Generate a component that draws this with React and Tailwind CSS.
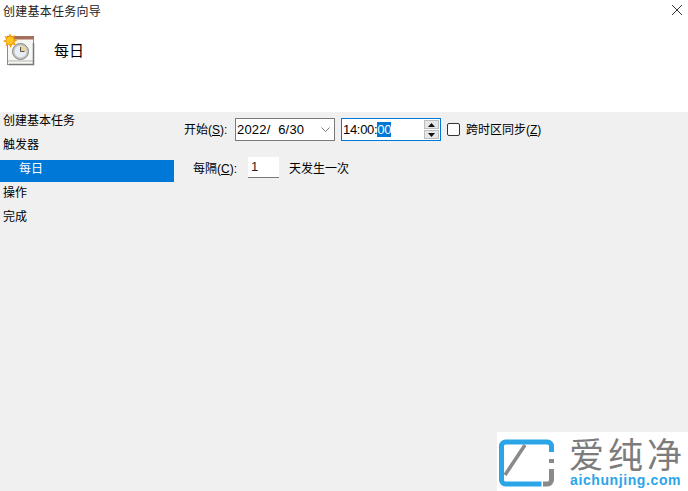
import React from 'react';

const cjk = "font-['Liberation_Sans','Noto_Sans_CJK_SC',sans-serif]";

const TaskIcon = () => (
    <svg width="34" height="34" viewBox="0 0 34 34" className="block">
        <g transform="translate(-3 -1)">
            <rect x="7.500" y="4.500" width="26" height="27" fill="#f6f6f2" stroke="#8c8c8c" />
            <rect x="7" y="3" width="27" height="3.500" fill="#a5705a" />
            <rect x="8" y="27" width="25" height="2" fill="#d4d4d4" />
            <path d="M9 31.500h24.500V10" fill="none" stroke="#777" strokeWidth="1.500" />
            <circle cx="20.500" cy="18.500" r="8" fill="#c4c4c4" stroke="#888" />
            <circle cx="20.500" cy="18.500" r="6" fill="#e8eef4" />
            <path d="M20.500 12.500a6 6 0 0 1 6 6h-6z" fill="#ecd49a" />
            <path d="M20.500 14v4.500h4" fill="none" stroke="#555" strokeWidth="1" />
            <path d="M10 0l1.500 3.700 3.600-1.700-1.200 3.800 3.800 1.200-3.400 1.900 1.700 3.500-3.900-1-1.300 3.600-1.900-3.400-3.500 1.700 1-3.800-3.800-1.400 3.500-1.700-1.700-3.500 3.800 1z" fill="#f59f0a" />
            <circle cx="10" cy="7.500" r="3.500" fill="#ffc820" />
        </g>
    </svg>
);

const Logo = () => (
    <div className="absolute right-0 bottom-0 w-[191px] h-[59px] bg-white flex pl-[2px] pt-[7px]">
        <svg width="56" height="48" viewBox="0 0 56 48" className="shrink-0">
            <path d="M2.500 28V7a4 4 0 0 1 4-4h42a4 4 0 0 1 4 4v6" fill="none" stroke="#2ba5e8" strokeWidth="5" />
            <path d="M2.500 28v13a4 4 0 0 0 4 4h36" fill="none" stroke="#2ba5e8" strokeWidth="5" />
            <path d="M52.500 20v4" stroke="#8a8a8a" strokeWidth="5" />
            <path d="M52.500 30v11a4 4 0 0 1-4 4H44" fill="none" stroke="#8a8a8a" strokeWidth="5" />
            <path d="M6 36L26 6" stroke="#8a8a8a" strokeWidth="3.500" />
        </svg>
        <div className="ml-[14px] flex flex-col">
            <div className="text-[35px] h-[32px] leading-[32px] tracking-[4px] text-[#7c7c7c] font-['Noto_Sans_CJK_SC',sans-serif] whitespace-nowrap -mt-[2px]">爱纯净</div>
            <div className="mt-[4px] pl-[1px] text-[14px] leading-[14px] font-bold tracking-[0.6px] text-[#2ba5e8] font-['Liberation_Sans',sans-serif] whitespace-nowrap">aichunjing.com</div>
        </div>
    </div>
);

const SideItem = ({ children, active }) => (
    <div className={active ? 'h-[22px] mb-[2px] pl-[19px] bg-[#0078d7] text-white leading-[19px]' : 'h-[22px] mb-[2px] pl-[3px] leading-[19px]'}>
        {children}
    </div>
);

export default function App() {
    return (
        <div className={`relative w-[688px] h-[491px] overflow-hidden bg-white text-[12px] text-black ${cjk}`}>
            <div className="h-[112px] bg-white relative">
                <div className="pl-[3px] pt-[4px] leading-[16px] tracking-[0.25px] text-[#222]">创建基本任务向导</div>
                <div className="flex items-center mt-[14px] pl-[3px]">
                    <TaskIcon />
                    <span className="ml-[17px] text-[15px] leading-[20px]">每日</span>
                </div>
                <svg width="10" height="10" viewBox="0 0 10 10" className="absolute top-[5px] left-[672px]">
                    <path d="M0 0l10 10M10 0L0 10" stroke="#333" strokeWidth="1" fill="none" />
                </svg>
            </div>

            <div className="flex h-[379px] bg-[#f0f0f0]">
                <div className="w-[174px] shrink-0">
                    <SideItem>创建基本任务</SideItem>
                    <SideItem>触发器</SideItem>
                    <SideItem active>每日</SideItem>
                    <SideItem>操作</SideItem>
                    <SideItem>完成</SideItem>
                </div>
                <div className="pl-[10px] pt-[6px]">
                    <div className="flex items-center h-[23px]">
                        <span className="w-[51px]">开始(<u>S</u>):</span>
                        <div className="w-[100px] h-[23px] border border-[#7a7a7a] bg-white flex items-center justify-between pl-[1px] pr-[4px] text-[13px]">
                            <span className="whitespace-pre tracking-[0.2px]">2022/  6/30</span>
                            <svg width="9" height="5" viewBox="0 0 9 5">
                                <path d="M0.500 0.500l4 4 4-4" fill="none" stroke="#777" />
                            </svg>
                        </div>
                        <div className="ml-[6px] w-[100px] h-[23px] border border-[#0078d7] bg-white flex items-center justify-between pl-[1px] pr-[1px] text-[13px] tracking-[-0.3px]">
                            <span>14:00:<span className="bg-[#0078d7] text-white">00</span></span>
                            <div className="flex flex-col gap-[1px]">
                                <div className="w-[15px] h-[9px] bg-[#e6e6e6] border border-[#bdbdbd] flex items-center justify-center">
                                    <svg width="7" height="4" viewBox="0 0 7 4"><path d="M3.500 0L7 4H0z" fill="#111" /></svg>
                                </div>
                                <div className="w-[15px] h-[9px] bg-[#e6e6e6] border border-[#bdbdbd] flex items-center justify-center">
                                    <svg width="7" height="4" viewBox="0 0 7 4"><path d="M0 0h7L3.500 4z" fill="#111" /></svg>
                                </div>
                            </div>
                        </div>
                        <div className="ml-[6px] w-[13px] h-[13px] border border-[#333] bg-white rounded-[2px]" />
                        <span className="ml-[6px]">跨时区同步(<u>Z</u>)</span>
                    </div>
                    <div className="flex items-center mt-[16px] pl-[9px]">
                        <span className="w-[55px] pt-[2px]">每隔(<u>C</u>):</span>
                        <div className="w-[31px] h-[21px] bg-white border-b border-[#7a7a7a] pl-[3px] leading-[20px] text-[13px] text-[#222]">1</div>
                        <span className="ml-[10px] pt-[2px]">天发生一次</span>
                    </div>
                </div>
            </div>

            <Logo />
        </div>
    );
}
